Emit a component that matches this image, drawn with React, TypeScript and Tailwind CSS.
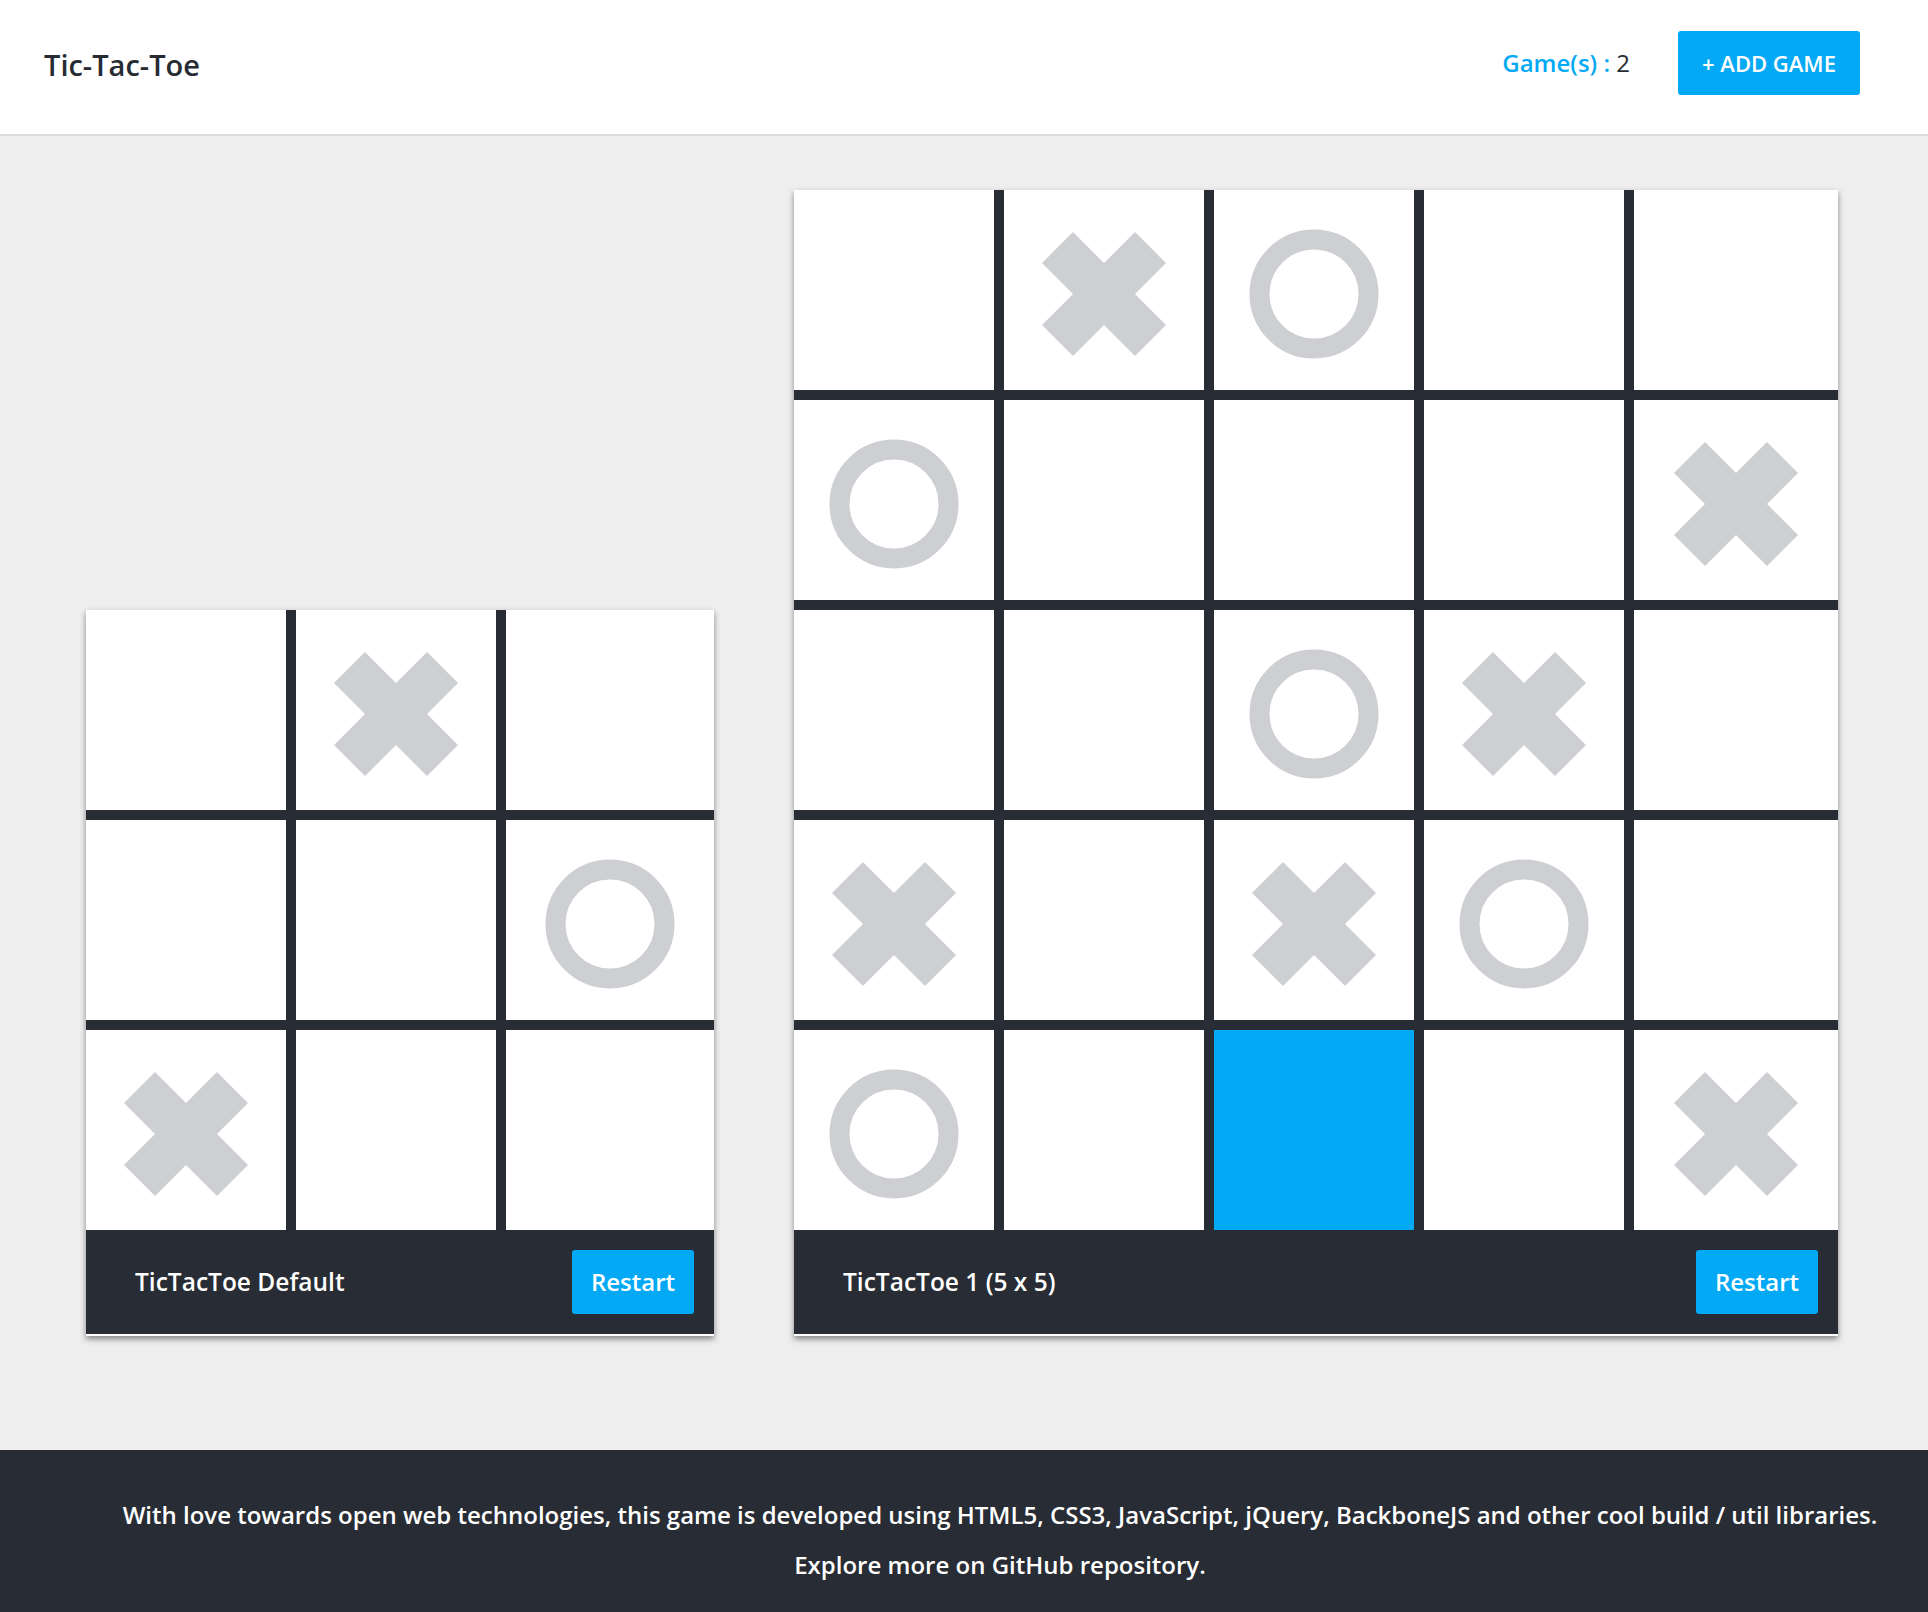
import React from "react"

type Mark = "" | "X" | "O" | "B"

const smallBoard: Mark[][] = [
  ["", "X", ""],
  ["", "", "O"],
  ["X", "", ""],
]

const bigBoard: Mark[][] = [
  ["", "X", "O", "", ""],
  ["O", "", "", "", "X"],
  ["", "", "O", "X", ""],
  ["X", "", "X", "O", ""],
  ["O", "", "B", "", "X"],
]

function Cross() {
  return (
    <svg width="124" height="124" viewBox="-62 -62 124 124">
      <polygon
        fill="#cecfd3"
        points="-31,-62 0,-31 31,-62 62,-31 31,0 62,31 31,62 0,31 -31,62 -62,31 -31,0 -62,-31"
      />
    </svg>
  )
}

function Circle() {
  return (
    <svg width="130" height="130" viewBox="-65 -65 130 130">
      <circle cx="0" cy="0" r="54.5" fill="none" stroke="#cecfd3" strokeWidth="20" />
    </svg>
  )
}

function Cell({ mark }: { mark: Mark }) {
  if (mark === "B") return <div className="h-[200px] bg-[#03a9f4]" />
  return (
    <div className="h-[200px] bg-white flex items-center justify-center pt-2">
      {mark === "X" && <Cross />}
      {mark === "O" && <Circle />}
    </div>
  )
}

function Board({ title, rows, width, cols }: { title: string; rows: Mark[][]; width: string; cols: string }) {
  return (
    <div className={`${width} bg-[#282c34] shadow-[0_3px_6px_rgba(0,0,0,0.45)]`}>
      <div className={`grid ${cols} gap-[10px]`}>
        {rows.flat().map((m, i) => (
          <Cell key={i} mark={m} />
        ))}
      </div>
      {/* card footer */}
      <div className="h-[106px] flex items-center justify-between pl-[49px] pr-[20px] border-b-2 border-white">
        <span className="text-white text-[24.5px] font-semibold">{title}</span>
        <button className="h-16 px-[19px] rounded-[3px] bg-[#03a9f4] text-white text-[24px] font-semibold">
          Restart
        </button>
      </div>
    </div>
  )
}

export default function App() {
  return (
    <div className="min-h-screen flex flex-col bg-[#eeeeee] font-['Open_Sans',sans-serif]">
      <header className="h-[136px] bg-white border-b-2 border-[#dcdcdc] flex items-center justify-between pl-[44px] pr-[68px]">
        <h1 className="text-[29px] font-semibold text-[#272b33] pb-1">Tic-Tac-Toe</h1>
        <div className="flex items-center gap-[48px] pb-2">
          <span className="text-[24px] font-semibold text-[#03a9f4]">
            Game(s) : <span className="font-medium text-[#272b33]">2</span>
          </span>
          <button className="h-16 w-[182px] rounded-[3px] bg-[#03a9f4] text-white text-[22px] font-semibold">
            + ADD GAME
          </button>
        </div>
      </header>

      <main className="flex items-end justify-center gap-[80px] pt-[54px] pb-[114px] pr-[4px]">
        <Board title="TicTacToe Default" rows={smallBoard} width="w-[628px]" cols="grid-cols-[200px_200px_1fr]" />
        <Board
          title="TicTacToe 1 (5 x 5)"
          rows={bigBoard}
          width="w-[1044px]"
          cols="grid-cols-[200px_200px_200px_200px_1fr]"
        />
      </main>

      <footer className="bg-[#282c34] text-white text-[24px] font-semibold text-center leading-[50px] pt-[40px] pb-[22px] pl-[72px]">
        <p>
          With love towards open web technologies, this game is developed using HTML5, CSS3, JavaScript, jQuery,
          BackboneJS and other cool build / util libraries.
        </p>
        <p>Explore more on GitHub repository.</p>
      </footer>
    </div>
  )
}
